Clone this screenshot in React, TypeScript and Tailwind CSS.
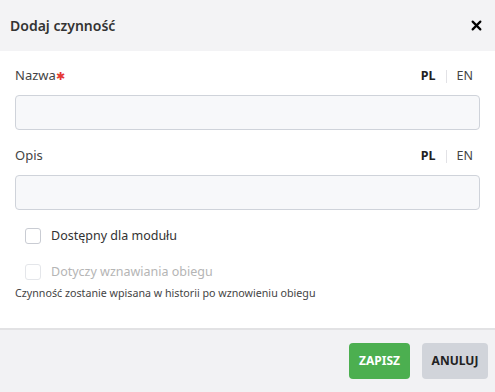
import React from "react";

function LangSwitch() {
  return (
    <div className="flex items-center text-[12.5px] leading-none">
      <span className="font-bold text-[#222]">PL</span>
      <span className="mx-[10px] h-[13px] w-px bg-[#e2e2e6]" />
      <span className="text-[#444]">EN</span>
    </div>
  );
}

function Field({ label, required }: { label: string; required?: boolean }) {
  return (
    <div className="flex flex-col">
      <div className="flex items-center justify-between pr-[7px] h-[20px]">
        <span className="flex items-center text-[13px] text-[#444]">
          {label}
          {required && <span className="text-[11px] text-[#e53935]">✱</span>}
        </span>
        <LangSwitch />
      </div>
      <input
        className="mt-[9px] h-[35px] w-full rounded-[4px] border border-[#cfd3da] bg-[#f7f8fa] px-2 text-[13px] outline-none"
      />
    </div>
  );
}

export default function App() {
  return (
    <div
      className="flex h-[392px] w-[495px] flex-col bg-white"
      style={{ fontFamily: '"Noto Sans", "Open Sans", sans-serif' }}
    >
      <div className="flex h-[51px] shrink-0 items-center justify-between bg-[#f3f3f5] pl-[10px] pr-[13px]">
        <span className="text-[14px] font-semibold text-[#333]">Dodaj czynność</span>
        <svg width="11" height="11" viewBox="0 0 10 10" className="text-black">
          <path d="M1.5 1.5l7 7M8.5 1.5l-7 7" stroke="currentColor" strokeWidth="2" strokeLinecap="round" />
        </svg>
      </div>

      <div className="flex flex-1 flex-col px-[15px] pt-[15px]">
        <Field label="Nazwa" required />
        <div className="h-[16px]" />
        <Field label="Opis" />

        <div className="mt-[17px] flex flex-col pl-[10px]">
          <label className="flex h-[18px] items-center gap-[10px]">
            <span className="h-[16px] w-[16px] rounded-[3px] border border-[#c9ccd3] bg-white" />
            <span className="text-[12.5px] text-[#333]">Dostępny dla modułu</span>
          </label>
          <label className="mt-[18px] flex h-[18px] items-center gap-[10px]">
            <span className="h-[16px] w-[16px] rounded-[3px] border border-[#e4e6ea] bg-white" />
            <span className="text-[12.5px] text-[#b5b5b5]">Dotyczy wznawiania obiegu</span>
          </label>
        </div>
        <div className="mt-[4px] text-[10.7px] text-[#444]">
          Czynność zostanie wpisana w historii po wznowieniu obiegu
        </div>
      </div>

      <div className="flex h-[64px] shrink-0 items-center justify-end gap-[12px] border-t-2 border-[#e2e2e4] bg-[#f2f2f4] pr-[7px]">
        <button className="h-[36px] w-[61px] rounded-[4px] bg-[#4caf50] text-[12px] font-bold text-white">
          ZAPISZ
        </button>
        <button className="h-[36px] w-[66px] rounded-[4px] bg-[#d1d4da] text-[12px] font-bold text-[#222]">
          ANULUJ
        </button>
      </div>
    </div>
  );
}
